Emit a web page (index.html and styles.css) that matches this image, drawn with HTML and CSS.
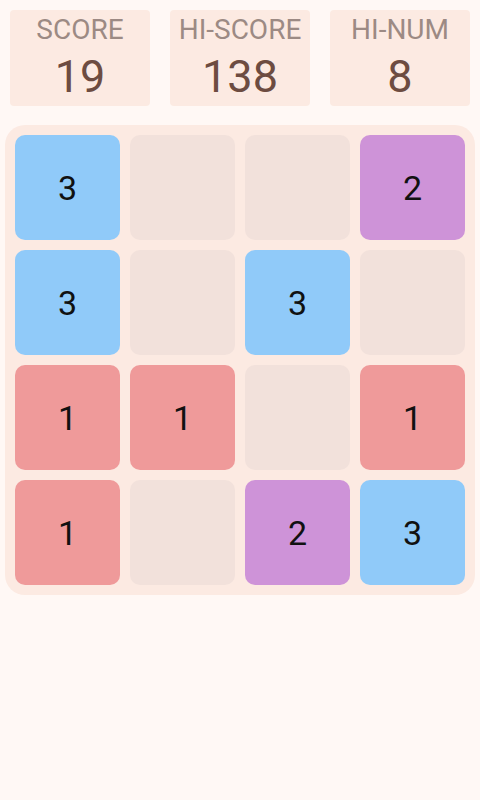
FILE: index.html
```html
<!DOCTYPE html>
<html lang="en">
<head>
  <meta charset="UTF-8">
  <title>Threes</title>
  <link rel="stylesheet" href="styles.css">
</head>
<body>
  <header class="scores">
    <div class="score-box">
      <div class="label">SCORE</div>
      <div class="value">19</div>
    </div>
    <div class="score-box">
      <div class="label">HI-SCORE</div>
      <div class="value">138</div>
    </div>
    <div class="score-box">
      <div class="label">HI-NUM</div>
      <div class="value">8</div>
    </div>
  </header>

  <main class="board">
    <div class="tile blue">3</div>
    <div class="tile"></div>
    <div class="tile"></div>
    <div class="tile purple">2</div>

    <div class="tile blue">3</div>
    <div class="tile"></div>
    <div class="tile blue">3</div>
    <div class="tile"></div>

    <div class="tile red">1</div>
    <div class="tile red">1</div>
    <div class="tile"></div>
    <div class="tile red">1</div>

    <div class="tile red">1</div>
    <div class="tile"></div>
    <div class="tile purple">2</div>
    <div class="tile blue">3</div>
  </main>
</body>
</html>
```

FILE: styles.css
```css
body {
  font-family: Roboto, "Noto Sans", sans-serif;
  margin: 0;
  padding: 0;
  background-color: #FFF8F5;
  width: 480px;
  height: 800px;
}

.scores {
  display: flex;
  justify-content: space-between;
  padding: 10px 10px 0;
}

.score-box {
  width: 140px;
  height: 96px;
  background-color: #FCEAE2;
  border-radius: 4px;
  text-align: center;
}

.label {
  font-size: 28px;
  line-height: 30px;
  color: #9C8A84;
  padding-top: 5px;
}

.value {
  font-size: 45px;
  line-height: 50px;
  color: #6D4C41;
  margin-top: 7px;
}

.board {
  margin: 19px 5px 0;
  padding: 10px;
  background-color: #FCEAE2;
  border-radius: 20px;
  display: grid;
  grid-template-columns: repeat(4, 105px);
  grid-auto-rows: 105px;
  gap: 10px;
}

.tile {
  background-color: #F2E1DB;
  border-radius: 10px;
  display: flex;
  align-items: center;
  justify-content: center;
  font-size: 34px;
  color: #111;
}

.tile.blue {
  background-color: #90CAF9;
}

.tile.purple {
  background-color: #CE93D8;
}

.tile.red {
  background-color: #EF9A9A;
}
```
